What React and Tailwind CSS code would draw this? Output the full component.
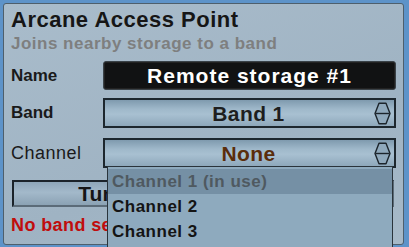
import React from "react";

const font = { fontFamily: '"Liberation Sans", Arial, sans-serif' };

// Up/down arrow glyph used on the select boxes
const UpDown = () => (
  <svg width="17" height="23" viewBox="0 0 17 23" className="shrink-0">
    <path d="M5 1.2 H12 L16 11.5 L12 21.8 H5 L1 11.5 Z" fill="#8fa9bc" stroke="#1c252c" strokeWidth="1.4" strokeLinejoin="round" />
    <path d="M1.5 11.5 H15.5" stroke="#1c252c" strokeWidth="1.4" />
  </svg>
);

const Select = ({ value, color = "text-[#1e1e1e]" }) => (
  <div className="flex h-[30px] flex-1 items-center border-2 border-[#1d272e] bg-[linear-gradient(to_bottom,#7f9aae,#9fb8ca_35%,#a8c0d1_55%,#8ea8bb)] pl-2 pr-[3px]">
    <span className={`flex-1 pl-[10px] text-center text-[21px] font-bold leading-none tracking-[0.4px] ${color}`}>{value}</span>
    <UpDown />
  </div>
);

const App = () => {
  const channels = [
    { label: "Channel 1 (in use)", used: true },
    { label: "Channel 2" },
    { label: "Channel 3" },
  ];

  return (
    <div style={font} className="h-[247px] w-[409px] overflow-hidden bg-[#5d93c9] pl-[3px] pr-[5px] pt-[3px]">
      <div className="relative h-[242px] rounded-[3px] border border-[#4e5f6c] bg-[linear-gradient(160deg,#a9bccb,#9fb3c3_60%,#a6b9c8)] px-[7px] pt-[3px]">
        <h1 className="text-[22px] font-bold leading-[26px] tracking-[0.5px] text-[#161616]">Arcane Access Point</h1>
        <p className="text-[17px] font-bold leading-[22px] tracking-[0.5px] text-[#7e7f7f]">Joins nearby storage to a band</p>

        <div className="mt-[6px] flex items-center">
          <span className="w-[92px] text-[17px] font-bold text-[#1a1a1a]">Name</span>
          <div className="flex h-[29px] flex-1 items-center justify-center rounded-[3px] border border-[#3a4248] bg-[#111213] shadow-[inset_0_0_0_1px_#222]">
            <span className="text-[21px] font-bold tracking-[1px] text-white">Remote storage #1</span>
          </div>
        </div>

        <div className="mt-[8px] flex items-center">
          <span className="w-[92px] text-[17px] font-bold text-[#1a1a1a]">Band</span>
          <Select value="Band 1" />
        </div>

        <div className="mt-[10px] flex items-center">
          <span className="w-[92px] text-[18px] tracking-[0.5px] text-[#1a1a1a]">Channel</span>
          <Select value="None" color="text-[#5a2d0b]" />
        </div>

        <button
          type="button"
          className="mt-[12px] ml-[1px] flex h-[27px] w-[382px] items-center justify-center border-2 border-[#1b232a] border-r-[#5b6b78] border-b-[#5b6b78] bg-[linear-gradient(to_bottom,#8ea6b9,#a3b9ca_45%,#8ba2b4)] text-[21px] font-bold text-[#161616]"
        >
          Tune to selected channel
        </button>

        <p className="mt-[8px] text-[18px] font-bold leading-[20px] tracking-[0.4px] text-[#c00d0d]">No band selected</p>

        {/* open channel dropdown */}
        <div className="absolute left-[103px] top-[162px] w-[286px] border border-[#2a343b] bg-[#8eaabe] pt-[2px]">
          {channels.map((c) => (
            <div
              key={c.label}
              className={`flex h-[25px] items-center px-[4px] text-[17px] font-bold tracking-[0.5px] ${
                c.used ? "bg-[#7590a5] text-[#4f5960]" : "text-[#141414]"
              }`}
            >
              {c.label}
            </div>
          ))}
          <div className="h-[20px]" />
        </div>
      </div>
    </div>
  );
};

export default App;
